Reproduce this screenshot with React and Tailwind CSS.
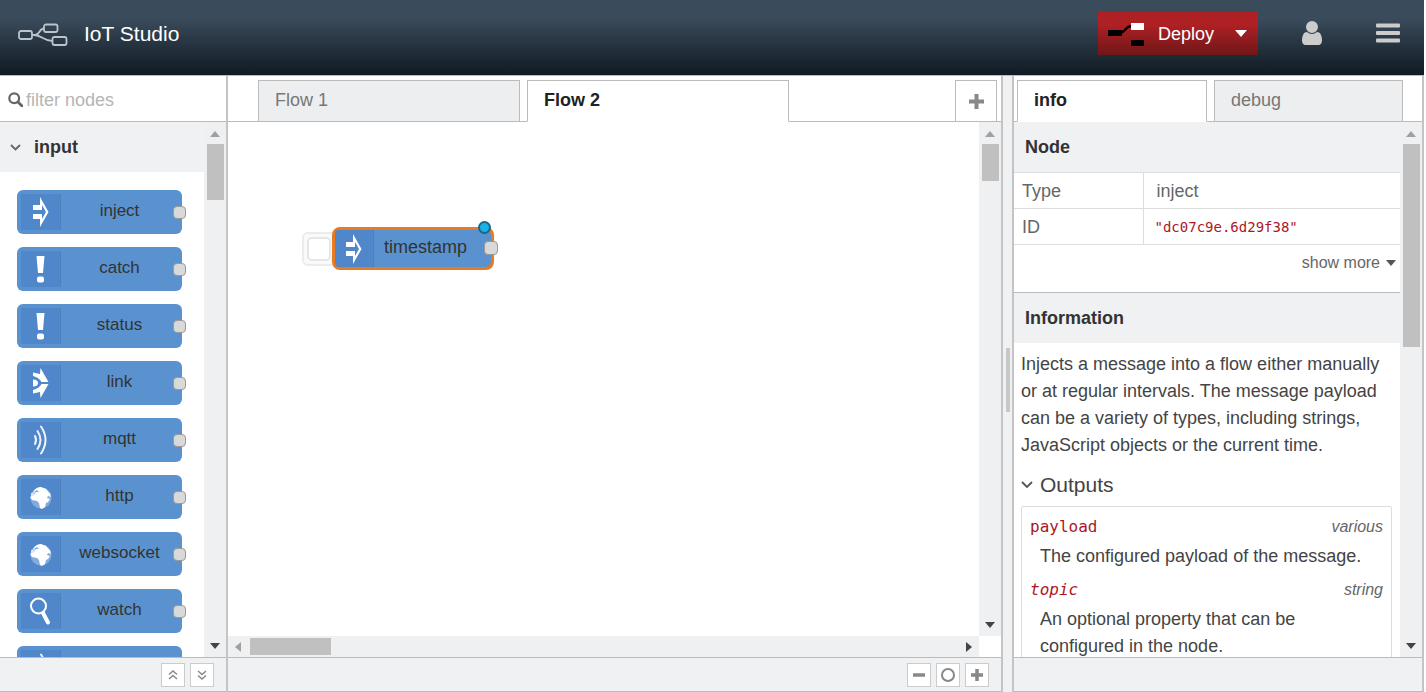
import React from 'react';

const paletteNodes = [
  { name: 'inject', icon: 'inject' },
  { name: 'catch', icon: 'alert' },
  { name: 'status', icon: 'alert' },
  { name: 'link', icon: 'link' },
  { name: 'mqtt', icon: 'bridge' },
  { name: 'http', icon: 'globe' },
  { name: 'websocket', icon: 'globe' },
  { name: 'watch', icon: 'watch' },
  { name: '', icon: 'bridge' },
];

const outputs = [
  { name: 'payload', type: 'various', text: 'The configured payload of the message.' },
  { name: 'topic', type: 'string', text: 'An optional property that can be configured in the node.', optional: true },
];

const NodeIcon = ({ icon }) => (
  <svg viewBox="-2 0 30 40" className="h-10 w-[30px] shrink-0" fill="#fff">
    {icon === 'inject' && (
      <path d="M5 13h7V5l8.500 15L12 35v-8H5v-5h9v5l4-7-4-7v5H5z" />
    )}
    {icon === 'alert' && (
      <>
        <path d="M8.500 7h8l-1.500 17h-5z" />
        <rect x="9" y="27.500" width="7" height="6" rx="2" />
      </>
    )}
    {icon === 'link' && (
      <>
        <path d="M12.500 5L20.500 19h-7q-2.500-4.500-8.500-6V9.500l7 1.500z" />
        <path d="M12.500 35l8-14h-7q-2.500 4.500-8.500 6v3.500l7-1.500z" />
        <path d="M5 16.500q5 0 5 3.500t-5 3.500z" />
      </>
    )}
    {icon === 'bridge' && (
      <g fill="none" stroke="#fff" strokeWidth="2" strokeLinecap="round" opacity="0.9">
        <path d="M7 16q2 4 0 8" />
        <path d="M9.500 11q6 9 0 18" />
        <path d="M13 6.500q9 13.500 0 27" />
      </g>
    )}
    {icon === 'globe' && (
      <>
        <circle cx="13" cy="21" r="10.500" opacity="0.3" />
        <path d="M5 15q3-5 8-5l5 2 2 3 2 1 1 4-3-1-1 2 3 1-2 3-2 1-1 4-3 2-2-1-1-5-2-2-5-1-2-3 4-2 2-3 3 0-2-2-3 2z" />
        <path d="M3 16l4-1-1 3-3 2zM17 11l4 4-3 1z" opacity="0.7" />
      </>
    )}
    {icon === 'watch' && (
      <g fill="none" stroke="#fff">
        <circle cx="10.500" cy="15" r="7.500" strokeWidth="2" />
        <path d="M15 22l5 9.500" strokeWidth="4" strokeLinecap="round" />
      </g>
    )}
  </svg>
);

const PaletteNode = ({ node }) => (
  <li className="relative flex h-11 w-[165px] rounded-md bg-[#5a92cf]">
    <span className="my-1 ml-1 flex w-10 items-center justify-center border-r border-[#4a80c0] bg-[#4f87ca]">
      <NodeIcon icon={node.icon} />
    </span>
    <span className="flex-1 pr-1 text-center text-[17px] leading-[42px] text-[#333]">{node.name}</span>
    <span className="absolute -right-1 top-4 h-[13px] w-[13px] rounded-[4px] border border-[#999] bg-[#d9d9d9]" />
  </li>
);

const Arrow = ({ dir, dark }) => {
  const paths = {
    up: 'M0 8l5-6 5 6z',
    down: 'M0 2l5 6 5-6z',
    left: 'M8 0l-6 5 6 5z',
    right: 'M2 0l6 5-6 5z',
  };
  return (
    <svg viewBox="0 0 10 10" className="h-[10px] w-[10px] shrink-0" fill={dark ? '#444' : '#a0a0a0'}>
      <path d={paths[dir]} />
    </svg>
  );
};

const VScroll = ({ thumb }) => (
  <div className="flex w-[22px] shrink-0 flex-col items-center bg-[#eff0f2] pt-[7px] pb-[6px]">
    <Arrow dir="up" />
    <div className={`mt-[5px] mb-auto w-[17px] bg-[#c0c0c0] ${thumb}`} />
    <Arrow dir="down" dark />
  </div>
);

const FooterButton = ({ label, children }) => (
  <button aria-label={label} className="flex h-6 w-6 items-center justify-center border border-[#ccc] bg-white">
    <svg viewBox="0 0 16 16" className="h-4 w-4" fill="none" stroke="#888">
      {children}
    </svg>
  </button>
);

const Tab = ({ active, className, children }) => (
  <button
    className={`h-[42px] border border-[#bbb] px-4 pb-[2px] text-left text-lg ${
      active ? 'border-b-white bg-white font-bold text-[#222]' : 'bg-[#edeef0] text-[#777]'
    } ${className}`}
  >
    {children}
  </button>
);

const Header = () => (
  <header className="flex h-[75px] shrink-0 items-start bg-linear-to-b from-[#3a4b5b] from-25% to-[#111a23] pl-[18px] text-white">
    <svg viewBox="0 0 50 24" className="mt-[23px] h-6 w-[50px]" fill="none" stroke="#bcc3ca" strokeWidth="1.800">
      <rect x="1" y="8" width="13" height="8" rx="2" />
      <rect x="26" y="1.500" width="13.500" height="7.500" rx="2" />
      <rect x="34.500" y="14" width="14" height="8" rx="2" />
      <path d="M14 12h3c5 0 4-6.500 9-6.500M16 12c8 0 9 6 18.500 6" />
    </svg>
    <h1 className="ml-4 mt-[18px] text-[21px] leading-8">IoT Studio</h1>
    <div className="ml-auto mt-3 flex h-[43px] bg-linear-to-b from-[#ae2024] from-30% to-[#701618]">
      <button className="flex items-center pl-[10px] text-lg">
        <svg viewBox="0 0 38 26" className="mr-3 h-[26px] w-[38px]">
          <path d="M12 12c5 0 5-7 12-7" fill="none" stroke="#000" strokeWidth="2.500" />
          <rect x="0" y="9" width="14" height="6" />
          <rect x="23" y="2" width="13" height="7" fill="#fff" />
          <rect x="23" y="19" width="13" height="6" />
        </svg>
        Deploy
      </button>
      <button aria-label="Deploy options" className="flex w-11 items-center pl-[21px]">
        <svg viewBox="0 0 12 7" className="h-[7px] w-3" fill="#fff"><path d="M0 0h12l-6 7z" /></svg>
      </button>
    </div>
    <button aria-label="User" className="ml-11 mt-[21px]">
      <svg viewBox="0 128 1280 1536" className="h-6 w-5" fill="#ccc">
        <path d="M1280 1399q0 109-62.500 187t-150.500 78h-854q-88 0-150.500-78t-62.500-187q0-85 8.500-160.500t31.500-152 58.500-131 94-89 134.500-34.500q131 128 313 128t313-128q76 0 134.500 34.500t94 89 58.500 131 31.500 152 8.500 160.500zm-256-887q0 159-112.500 271.500t-271.500 112.500-271.500-112.500-112.500-271.500 112.500-271.500 271.500-112.500 271.500 112.500 112.500 271.500z" />
      </svg>
    </button>
    <button aria-label="Menu" className="ml-[54px] mr-6 mt-[23px]">
      <svg viewBox="0 0 24 20" className="h-5 w-6" fill="#ccc">
        <rect y="0.500" width="24" height="4" rx="1" />
        <rect y="8" width="24" height="4" rx="1" />
        <rect y="15.500" width="24" height="4" rx="1" />
      </svg>
    </button>
  </header>
);

const Palette = () => (
  <aside className="flex w-[228px] shrink-0 flex-col border-r-2 border-[#c4c4c4]">
    <label className="flex h-[46px] shrink-0 items-center border-b border-[#bbb] pl-2 pt-[2px]">
      <svg viewBox="0 0 15 15" className="h-[15px] w-[15px] shrink-0" fill="none" stroke="#666" strokeWidth="2.200">
        <circle cx="6.200" cy="6.200" r="4.900" />
        <path d="M10 10l4 4" strokeWidth="2.800" strokeLinecap="round" />
      </svg>
      <input
        type="text"
        aria-label="filter nodes"
        placeholder="filter nodes"
        className="ml-[3px] w-full min-w-0 text-lg outline-none placeholder:text-[#b5b5b5]"
      />
    </label>
    <div className="flex min-h-0 flex-1">
      <div className="min-w-0 flex-1 overflow-hidden">
        <h2 className="flex h-[50px] items-center bg-[#f0f1f3] pl-[10px] text-lg font-bold text-[#333]">
          <svg viewBox="0 0 11 7" className="mr-[13px] h-[7px] w-[11px]" fill="none" stroke="#666" strokeWidth="1.800">
            <path d="M1 1l4.500 4.500L10 1" />
          </svg>
          input
        </h2>
        <ul className="flex flex-col gap-[13px] pl-[17px] pt-[18px]">
          {paletteNodes.map((node, index) => (
            <PaletteNode key={index} node={node} />
          ))}
        </ul>
      </div>
      <VScroll thumb="h-14" />
    </div>
    <footer className="flex h-[35px] shrink-0 items-center justify-end gap-[5px] border-y border-[#bbb] bg-[#f0f1f3] pr-3">
      <FooterButton label="Collapse all"><path d="M4 7.500l4-3.500 4 3.500M4 12l4-3.500 4 3.500" strokeWidth="1.500" /></FooterButton>
      <FooterButton label="Expand all"><path d="M4 4l4 3.500L12 4M4 8.500l4 3.500 4-3.500" strokeWidth="1.500" /></FooterButton>
    </footer>
  </aside>
);

const Workspace = () => (
  <main className="flex min-w-0 flex-1 flex-col border-r-2 border-[#c4c4c4]">
    <div className="flex h-[46px] shrink-0 items-end border-b border-[#bbb] pl-[30px] pr-1">
      <Tab className="-mb-px w-[262px]">Flow 1</Tab>
      <Tab active className="-mb-px ml-[7px] w-[262px]">Flow 2</Tab>
      <button aria-label="Add flow" className="-mb-px ml-auto flex h-[42px] w-[42px] items-center justify-center border border-[#bbb]">
        <svg viewBox="0 0 15 15" className="h-[15px] w-[15px]" stroke="#888" strokeWidth="4">
          <path d="M7.500 0v15M0 7.500h15" />
        </svg>
      </button>
    </div>
    <div className="flex min-h-0 flex-1">
      <div className="flex min-w-0 flex-1 flex-col">
        <div className="relative flex-1 overflow-hidden">
          <div className="absolute left-[74px] top-[110px] h-[34px] w-9 rounded-md border-2 border-[#ececec] bg-[#fafafa]">
            <button aria-label="Trigger inject" className="ml-[3px] mt-[3px] block h-6 w-6 rounded-[5px] border-2 border-[#e6e6e6] bg-white" />
          </div>
          <div className="absolute left-[104px] top-[105px] flex h-[43px] w-[162px] items-center rounded-lg border-[3px] border-[#e87b20] bg-[#5a92cf]">
            <span className="flex h-full w-[39px] items-center justify-center rounded-l-sm border-r border-[#4a80c0] bg-[#4f87ca]">
              <NodeIcon icon="inject" />
            </span>
            <span className="flex-1 pb-[3px] pr-[14px] text-center text-lg leading-8 text-[#333]">timestamp</span>
          </div>
          <span className="absolute left-[256px] top-[119px] h-[14px] w-[14px] rounded-[4px] border border-[#999] bg-[#d9d9d9]" />
          <span className="absolute left-[250px] top-[99px] h-[13px] w-[13px] rounded-full border-2 border-[#17678c] bg-[#1cb0e8]" />
        </div>
        <div className="flex h-[21px] shrink-0 items-center bg-[#eff0f2] px-[5px]">
          <Arrow dir="left" />
          <div className="ml-[7px] mr-auto h-[17px] w-[81px] bg-[#c0c0c0]" />
          <Arrow dir="right" dark />
        </div>
      </div>
      <div className="flex pb-[21px]">
        <VScroll thumb="h-[37px]" />
      </div>
    </div>
    <footer className="flex h-[35px] shrink-0 items-center justify-end gap-[5px] border-y border-[#bbb] bg-[#f0f1f3] pr-3">
      <FooterButton label="Zoom out"><path d="M2 8h12" strokeWidth="3.500" /></FooterButton>
      <FooterButton label="Reset zoom"><circle cx="8" cy="8" r="6" strokeWidth="2" /></FooterButton>
      <FooterButton label="Zoom in"><path d="M2 8h12M8 2v12" strokeWidth="3.500" /></FooterButton>
    </footer>
  </main>
);

const Sidebar = () => (
  <aside className="flex w-[412px] shrink-0 flex-col border-x-2 border-[#c4c4c4]">
    <div className="flex h-[46px] shrink-0 items-end border-b border-[#bbb] pl-[3px]">
      <Tab active className="-mb-px w-[190px]">info</Tab>
      <Tab className="-mb-px ml-[7px] w-[189px]">debug</Tab>
    </div>
    <div className="flex min-h-0 flex-1">
      <div className="min-w-0 flex-1 overflow-hidden text-lg text-[#444]">
        <h2 className="h-[50px] bg-[#f0f1f3] pl-[11px] font-bold leading-[50px] text-[#333]">Node</h2>
        <table className="w-full border-collapse border-y border-[#ddd] text-[#666]">
          <tbody>
            <tr className="h-9 border-b border-[#ddd]">
              <th scope="row" className="w-[129px] border-r border-[#ddd] pl-2 text-left font-normal">Type</th>
              <td className="pl-[13px]">inject</td>
            </tr>
            <tr className="h-9">
              <th scope="row" className="border-r border-[#ddd] pl-2 text-left font-normal">ID</th>
              <td className="pl-[11px] font-['DejaVu_Sans_Mono',monospace] text-sm text-[#ad1625]">"dc07c9e.6d29f38"</td>
            </tr>
          </tbody>
        </table>
        <div className="flex h-[47px] justify-end pr-1 pt-1">
          <button className="flex h-7 items-center text-base text-[#666]">
            show more
            <svg viewBox="0 0 10 6" className="ml-[6px] h-[6px] w-[10px]" fill="#555"><path d="M0 0h10L5 6z" /></svg>
          </button>
        </div>
        <h2 className="h-[51px] border-t border-[#bbb] bg-[#f0f1f3] pl-[11px] font-bold leading-[50px] text-[#333]">Information</h2>
        <p className="pl-[7px] pt-2 leading-[27px]">
          Injects a message into a flow either manually or at regular intervals. The message payload can be a variety of types, including strings, JavaScript objects or the current time.
        </p>
        <h3 className="mt-[10px] flex h-8 items-center pl-[7px] text-[21px]">
          <svg viewBox="0 0 12 8" className="mr-[7px] h-2 w-3" fill="none" stroke="#555" strokeWidth="1.800">
            <path d="M1 1l5 5 5-5" />
          </svg>
          Outputs
        </h3>
        <dl className="ml-[7px] mr-2 mt-[5px] rounded-xs border border-[#ddd] px-2 pt-1">
          {outputs.map((output) => (
            <React.Fragment key={output.name}>
              <dt className="flex h-8 items-center justify-between">
                <code className={`font-['DejaVu_Sans_Mono',monospace] text-base text-[#ad1625] ${output.optional ? 'italic' : ''}`}>
                  {output.name}
                </code>
                <span className="text-base italic text-[#666]">{output.type}</span>
              </dt>
              <dd className="mb-1 pl-[10px] pr-10 leading-[27px] nth-2:pr-0">{output.text}</dd>
            </React.Fragment>
          ))}
        </dl>
      </div>
      <VScroll thumb="h-[203px]" />
    </div>
    <footer className="h-[35px] shrink-0 border-y border-[#bbb] bg-[#f0f1f3]" />
  </aside>
);

const App = () => {
  return (
    <div className="flex h-screen flex-col overflow-hidden bg-white pr-[2px] font-['Liberation_Sans',Arial,sans-serif]">
      <Header />
      <div className="flex min-h-0 flex-1 border-t border-[#bbb]">
        <Palette />
        <Workspace />
        <div className="flex w-[9px] shrink-0 items-center bg-[#f0f1f3] pb-2">
          <div className="ml-[3px] h-16 w-1 bg-[#c8c8c8]" />
        </div>
        <Sidebar />
      </div>
    </div>
  );
};

export default App;
